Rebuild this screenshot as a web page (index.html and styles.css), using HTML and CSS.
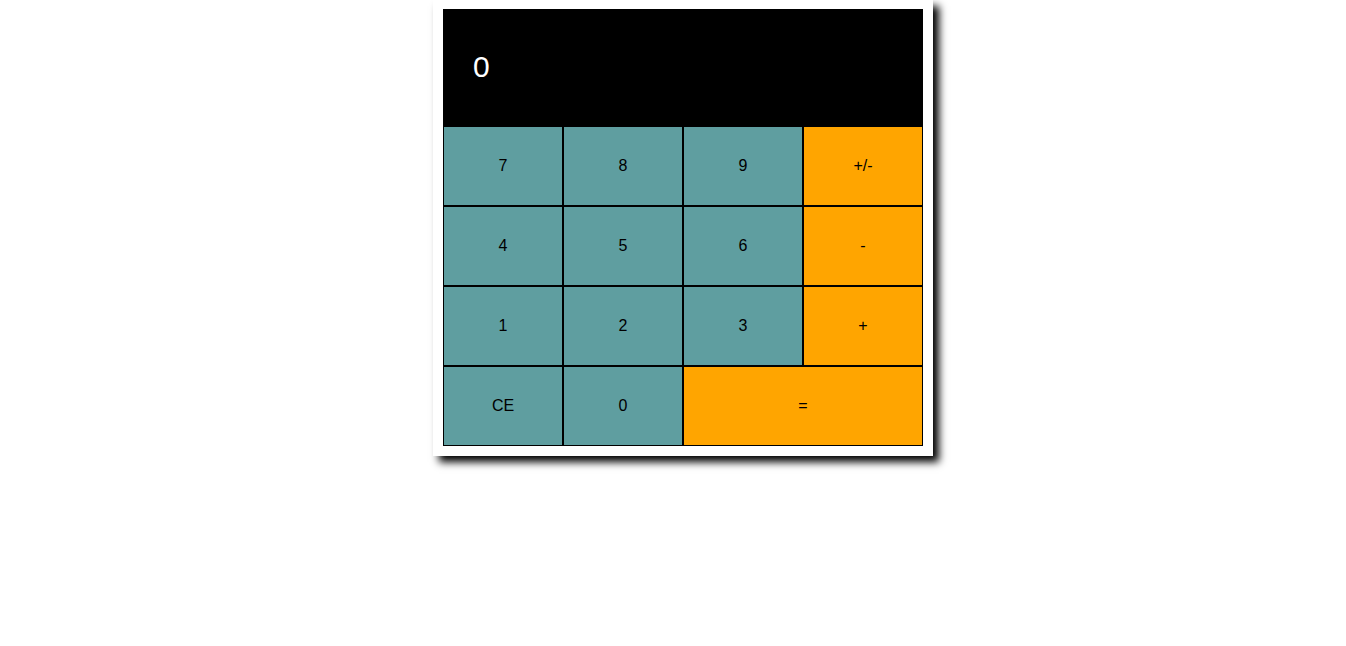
FILE: index.html
```html
<!DOCTYPE html>
<html>
<head>
<meta charset="utf-8">
<link rel="stylesheet" href="styles.css">
</head>
<body>
<div class="calc">
  <div class="display">0</div>
  <div class="keys">
    <button class="key num">7</button>
    <button class="key num">8</button>
    <button class="key num">9</button>
    <button class="key op">+/-</button>
    <button class="key num">4</button>
    <button class="key num">5</button>
    <button class="key num">6</button>
    <button class="key op">-</button>
    <button class="key num">1</button>
    <button class="key num">2</button>
    <button class="key num">3</button>
    <button class="key op">+</button>
    <button class="key num">CE</button>
    <button class="key num">0</button>
    <button class="key op wide">=</button>
  </div>
</div>
</body>
</html>
```
FILE: styles.css
```css
html, body {
  margin: 0;
  padding: 0;
  background: #fff;
}
body {
  font-family: "Liberation Sans", Arial, sans-serif;
  padding-bottom: 40px;
}
.calc {
  width: 480px;
  margin: 0 0 0 calc(50% - 240px);
  padding: 9px 10px 10px;
  background: #fff;
  box-shadow: 6px 6px 8px #000;
}
.display {
  height: 117px;
  background: #000;
  color: #fff;
  font-size: 30px;
  line-height: 115px;
  padding-left: 30px;
  box-sizing: border-box;
}
.keys {
  display: grid;
  grid-template-columns: repeat(4, 120px);
  grid-auto-rows: 80px;
}
.key {
  margin: 0;
  border: 1px solid #000;
  font-family: "Liberation Sans", Arial, sans-serif;
  font-size: 16px;
  color: #000;
  padding: 0;
  cursor: pointer;
}
.num {
  background: #5f9ea0;
}
.op {
  background: #ffa500;
}
.wide {
  grid-column: span 2;
}
```
